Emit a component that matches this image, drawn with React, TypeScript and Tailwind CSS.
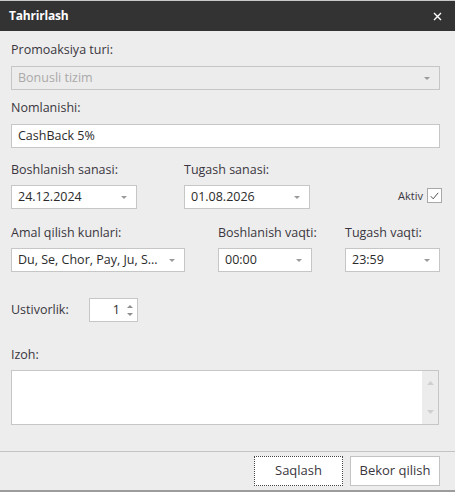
import React from 'react'

// small gray caret used by all dropdown fields
function Caret() {
  return (
    <svg width="6" height="3" viewBox="0 0 6 3" className="shrink-0">
      <path d="M0 0h6L3 3z" fill="#9a9a9a" />
    </svg>
  )
}

function Label({ children, className = '' }: { children: React.ReactNode; className?: string }) {
  return <div className={`h-4 leading-4 text-[#3a3640] ${className}`}>{children}</div>
}

function Dropdown({
  value,
  className = '',
  disabled = false,
}: {
  value: string
  className?: string
  disabled?: boolean
}) {
  return (
    <div
      className={`h-6 flex items-center justify-between pl-[6px] pr-[9px] border border-[#c6c6c6] ${
        disabled ? 'bg-[#ececec] text-[#a9a9a9]' : 'bg-white text-[#2b2b2b]'
      } ${className}`}
    >
      <span className="truncate">{value}</span>
      <Caret />
    </div>
  )
}

export default function App() {
  return (
    <div
      className="w-[455px] h-[492px] flex flex-col bg-[#ededed] border-t border-[#c9c9c9] text-[12.5px]"
      style={{ fontFamily: '"Open Sans", "Noto Sans", sans-serif' }}
    >
      <div className="h-[30px] shrink-0 bg-[#333333] flex items-center justify-between pl-[9px] pr-[13px]">
        <span className="text-white font-bold text-[12px] tracking-[-0.2px]">Tahrirlash</span>
        <svg width="9" height="9" viewBox="0 0 9 9">
          <path d="M1 1l7 7M8 1L1 8" stroke="#fff" strokeWidth="1.4" />
        </svg>
      </div>

      <div className="flex-1 px-[11px] pt-[11px]">
        <Label>Promoaksiya turi:</Label>
        <Dropdown value="Bonusli tizim" disabled className="mt-[8px] w-[429px]" />

        <Label className="mt-[10px]">Nomlanishi:</Label>
        <div className="mt-[8px] w-[429px] h-6 flex items-center pl-[6px] bg-white border border-[#c6c6c6] text-[#2b2b2b]">
          CashBack 5%
        </div>

        <div className="mt-[14px] flex items-end">
          <div className="w-[173px]">
            <Label>Boshlanish sanasi:</Label>
            <Dropdown value="24.12.2024" className="mt-[7px] w-[126px]" />
          </div>
          <div className="w-[126px]">
            <Label>Tugash sanasi:</Label>
            <Dropdown value="01.08.2026" className="mt-[7px] w-[126px]" />
          </div>
          <div className="ml-auto mb-[5px] mr-[2px] flex items-center gap-[4px]">
            <span className="text-[11px] text-[#3a3640]">Aktiv</span>
            <div className="w-[15px] h-[15px] bg-white border border-[#a8a8a8] flex items-center justify-center">
              <svg width="9" height="8" viewBox="0 0 9 8">
                <path d="M0.8 4.2l2.4 2.6L8.2 0.8" fill="none" stroke="#555" strokeWidth="1" />
              </svg>
            </div>
          </div>
        </div>

        <div className="mt-[16px] flex">
          <div className="w-[207px]">
            <Label>Amal qilish kunlari:</Label>
            <Dropdown value="Du, Se, Chor, Pay, Ju, S..." className="mt-[7px] w-[174px]" />
          </div>
          <div className="w-[127px]">
            <Label>Boshlanish vaqti:</Label>
            <Dropdown value="00:00" className="mt-[7px] w-[94px]" />
          </div>
          <div className="w-[95px]">
            <Label>Tugash vaqti:</Label>
            <Dropdown value="23:59" className="mt-[7px] w-[95px]" />
          </div>
        </div>

        <div className="mt-[26px] flex items-center">
          <Label className="w-[78px]">Ustivorlik:</Label>
          <div className="w-[49px] h-6 bg-white border border-[#c6c6c6] flex items-center justify-end pr-[4px] text-[#2b2b2b]">
            <span className="mr-[7px]">1</span>
            <div className="flex flex-col gap-[5px]">
              <svg width="6" height="3" viewBox="0 0 6 3">
                <path d="M0 3h6L3 0z" fill="#8f8f8f" />
              </svg>
              <svg width="6" height="3" viewBox="0 0 6 3">
                <path d="M0 0h6L3 3z" fill="#8f8f8f" />
              </svg>
            </div>
          </div>
        </div>

        <Label className="mt-[25px]">Izoh:</Label>
        <div className="mt-[7px] w-[428px] h-[55px] bg-white border border-[#c6c6c6] flex justify-end">
          <div className="w-[16px] bg-[#ececec] flex flex-col items-center justify-between py-[10px]">
            <svg width="7" height="4" viewBox="0 0 7 4">
              <path d="M0 4h7L3.5 0z" fill="#cfcfcf" />
            </svg>
            <svg width="7" height="4" viewBox="0 0 7 4">
              <path d="M0 0h7L3.5 4z" fill="#cfcfcf" />
            </svg>
          </div>
        </div>
      </div>

      <div className="h-[39px] shrink-0 border-t border-[#c3c3c3] flex items-start justify-end gap-[7px] pt-[4px] pr-[15px]">
        <button className="w-[89px] h-[30px] bg-white border border-dotted border-[#444] text-[#3a3640] text-[13px]">
          Saqlash
        </button>
        <button className="w-[90px] h-[30px] bg-white border border-[#c3c3c3] text-[#3a3640] text-[13px]">
          Bekor qilish
        </button>
      </div>
      <div className="h-[2px] shrink-0 bg-[#9c9c9c]" />
    </div>
  )
}
